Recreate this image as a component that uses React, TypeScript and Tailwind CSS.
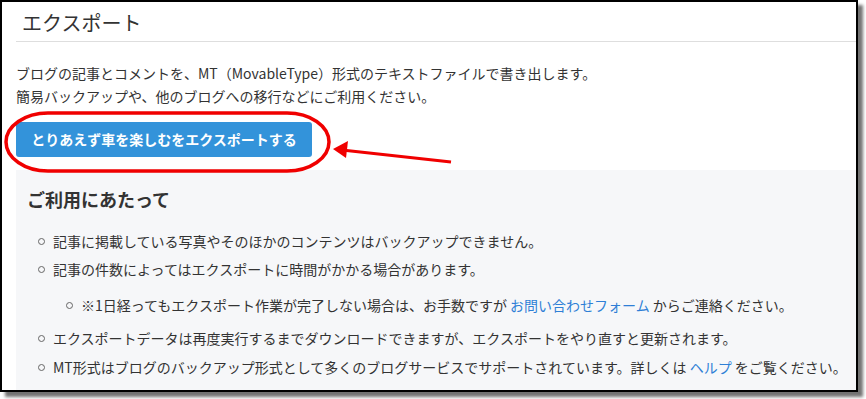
import React from "react";

const font = { fontFamily: '"Noto Sans CJK JP", "Noto Sans", sans-serif' };

function Bullet() {
  return <span className="inline-block w-[7px] h-[7px] rounded-full border-[1.5px] border-[#666] shrink-0" />;
}

function Item({ children, nested = false, className = "" }: { children: React.ReactNode; nested?: boolean; className?: string }) {
  return (
    <li className={`flex items-center h-[22px] ${nested ? "pl-[50px]" : "pl-[22px]"} ${className}`}>
      <Bullet />
      <span className="ml-[8px] whitespace-nowrap">{children}</span>
    </li>
  );
}

export default function App() {
  return (
    <div className="w-[866px] h-[399px] bg-white relative overflow-hidden" style={font}>
      <div className="w-[858px] h-[392px] border-2 border-black bg-white overflow-hidden shadow-[5px_5px_3px_rgba(0,0,0,0.55)]">
        <div className="pl-[14px] text-[#333]">
          <div className="h-[40px] border-b border-[#dedede] pl-[6px] flex items-center">
            <span className="text-[20px] leading-none text-[#333] pt-[2px]">エクスポート</span>
          </div>
          <div className="pt-[20px] text-[14px] leading-[23px]">
            <p>ブログの記事とコメントを、MT（MovableType）形式のテキストファイルで書き出します。</p>
            <p>簡易バックアップや、他のブログへの移行などにご利用ください。</p>
          </div>
          <div className="mt-[14px]">
            <button className="w-[296px] h-[35px] rounded-[3px] bg-[#3393da] text-white font-bold text-[14px] flex items-center justify-center">
              とりあえず車を楽しむをエクスポートする
            </button>
          </div>
          <div className="mt-[13px] bg-[#f6f7f9] h-[240px] pt-[16px]">
            <h3 className="pl-[11px] text-[18px] font-bold leading-[26px] text-[#333]">ご利用にあたって</h3>
            <ul className="mt-[18px] text-[14px] text-[#333]">
              <Item>記事に掲載している写真やそのほかのコンテンツはバックアップできません。</Item>
              <Item className="mt-[6px]">記事の件数によってはエクスポートに時間がかかる場合があります。</Item>
              <Item nested className="mt-[14px]">
                ※1日経ってもエクスポート作業が完了しない場合は、お手数ですが{" "}
                <span className="text-[#2f7fd6]">お問い合わせフォーム</span> からご連絡ください。
              </Item>
              <Item className="mt-[11px]">エクスポートデータは再度実行するまでダウンロードできますが、エクスポートをやり直すと更新されます。</Item>
              <Item className="mt-[7px]">
                MT形式はブログのバックアップ形式として多くのブログサービスでサポートされています。詳しくは{" "}
                <span className="text-[#2f7fd6]">ヘルプ</span> をご覧ください。
              </Item>
            </ul>
          </div>
        </div>
      </div>
      <svg className="absolute left-0 top-0 pointer-events-none" width="866" height="399">
        <rect x="6" y="113" width="323" height="58" rx="42" ry="29" fill="none" stroke="#f00000" strokeWidth="3.5" />
        <line x1="451" y1="162" x2="342" y2="150" stroke="#f00000" strokeWidth="3" />
        <polygon points="333,149 348,141 346,158" fill="#f00000" />
      </svg>
    </div>
  );
}
